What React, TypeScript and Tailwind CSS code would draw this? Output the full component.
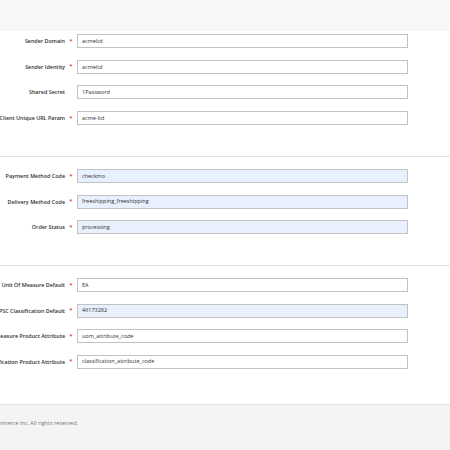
// Config form — three groups of label/field rows between a header band and footer.

interface Field {
  label: string
  value: string
  required?: boolean
  filled?: boolean
}

const groups: Field[][] = [
  [
    { label: 'Sender Domain', value: 'acmeltd', required: true },
    { label: 'Sender Identity', value: 'acmeltd', required: true },
    { label: 'Shared Secret', value: '1Password' },
    { label: 'Client Unique URL Param', value: 'acme-ltd', required: true },
  ],
  [
    { label: 'Payment Method Code', value: 'checkmo', required: true, filled: true },
    { label: 'Delivery Method Code', value: 'freeshipping_freeshipping', required: true, filled: true },
    { label: 'Order Status', value: 'processing', required: true, filled: true },
  ],
  [
    { label: 'Unit Of Measure Default', value: 'EA', required: true },
    { label: 'UNSPSC Classification Default', value: '46173282', required: true, filled: true },
    { label: 'Unit Of Measure Product Attribute', value: 'uom_attribute_code', required: true },
    { label: 'Classification Product Attribute', value: 'classification_attribute_code', required: true },
  ],
]

function Row({ field }: { field: Field }) {
  return (
    <div className="flex items-center h-[14px]">
      <div className="w-[65px] shrink-0 flex justify-end">
        <span className="whitespace-nowrap text-[5.4px] font-semibold text-[#303030]">{field.label}</span>
      </div>
      <div className="w-[12px] shrink-0 text-center text-[6px] font-semibold text-[#e22626] leading-none -mt-[1px]">
        {field.required ? '*' : ''}
      </div>
      <div
        className={[
          'w-[331px] h-[14px] shrink-0 border border-[#c2c2c2] flex items-center pl-[4px] text-[5.5px] text-[#303030]',
          field.filled ? 'bg-[#e8f0fe]' : 'bg-white',
        ].join(' ')}
      >
        {field.value}
      </div>
    </div>
  )
}

export default function App() {
  return (
    <div className="w-[450px] h-[450px] overflow-hidden bg-white flex flex-col font-['Open_Sans',sans-serif]">
      {/* Header band */}
      <div className="h-[30px] shrink-0 bg-[#f8f8f8] border-b border-[#efefef]" />

      {/* Group 1 */}
      <div className="flex flex-col gap-[11.7px] pt-[4px] pb-[31px]">
        {groups[0].map(f => <Row key={f.label} field={f} />)}
      </div>
      <div className="h-px bg-[#e3e3e3] shrink-0" />

      {/* Group 2 */}
      <div className="flex flex-col gap-[11.5px] pt-[12px] pb-[31px]">
        {groups[1].map(f => <Row key={f.label} field={f} />)}
      </div>
      <div className="h-px bg-[#e3e3e3] shrink-0" />

      {/* Group 3 */}
      <div className="flex flex-col gap-[11.5px] pt-[12px] pb-[35px]">
        {groups[2].map(f => <Row key={f.label} field={f} />)}
      </div>

      {/* Footer */}
      <div className="flex-1 bg-[#f4f4f4] border-t border-[#e3e3e3] pt-[14px]">
        <div className="w-[78px] flex justify-end">
          <span className="whitespace-nowrap text-[5.5px] text-[#777]">
            Copyright © 2024 Magento Commerce Inc. All rights reserved.
          </span>
        </div>
      </div>
    </div>
  )
}
